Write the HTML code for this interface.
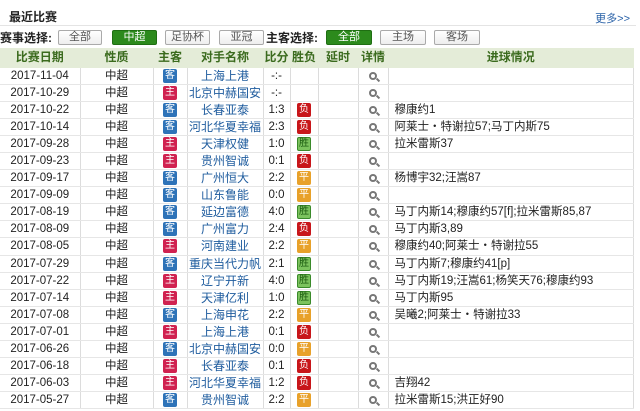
<!DOCTYPE html>
<html><head><meta charset="utf-8"><style>
*{margin:0;padding:0;box-sizing:border-box}
body{width:640px;height:411px;background:#fff;font-family:"Liberation Sans","Noto Sans CJK SC",sans-serif;font-size:11px;color:#222;position:relative;overflow:hidden}
.title{position:absolute;left:0;top:4px;width:636px;height:22px;border-bottom:1px solid #e4e4e4}
.title b{position:absolute;left:9px;top:4px;font-size:12px;color:#222}
.more{position:absolute;right:6px;top:6px;color:#2a62a8;font-size:11px}
.bar{position:absolute;top:27px;left:0;height:18px;width:640px}
.lbl{position:absolute;top:2px;font-size:12px;font-weight:bold;color:#222}
.btn{position:absolute;top:3px;height:15px;border:1px solid #aaa;border-radius:2px;background:linear-gradient(#fff,#eee);color:#555;text-align:center;font-size:11px;line-height:13px}
.btn.on{background:#2c8a1c;border-color:#1f6e12;color:#fff}
table{position:absolute;left:0;top:48px;width:634px;border-collapse:collapse;table-layout:fixed}
td,th{border-right:1px solid #dcdcdc;border-bottom:1px solid #e6e6e6;text-align:center;white-space:nowrap;overflow:hidden;height:17.1px;padding:0;line-height:16px;font-size:11.5px}
th{background:#e4ecd8;color:#3b6b1e;font-size:12px;height:19px;border-color:#e4ecd8}
td:last-child{text-align:left;padding-left:6px}
td.o{color:#1f5c9e;font-size:12px}
.b{display:inline-block;width:14px;height:14px;line-height:14px;font-size:10px;color:#fff;border-radius:2px;vertical-align:middle}
.k{background:#2e73b8}.z{background:#d02250}.f{background:#c8161a}.s{background:#7cc35e;color:#1c5c10;border:1px solid #3a8a2a;line-height:12px}.p{background:#e8a12a}
.q{display:inline-block;width:8px;height:8px;border:2px solid #777;border-radius:50%;position:relative;vertical-align:middle}
.q:after{content:"";position:absolute;left:5px;top:5px;width:4px;height:2px;background:#777;transform:rotate(45deg)}
</style></head><body>
<div class="title"><b>最近比赛</b><span class="more">更多&gt;&gt;</span></div>
<div class="bar">
<span class="lbl" style="left:0">赛事选择:</span>
<span class="btn" style="left:58px;width:44px">全部</span>
<span class="btn on" style="left:112px;width:45px">中超</span>
<span class="btn" style="left:165px;width:45px">足协杯</span>
<span class="btn" style="left:219px;width:45px">亚冠</span>
<span class="lbl" style="left:266px">主客选择:</span>
<span class="btn on" style="left:326px;width:46px">全部</span>
<span class="btn" style="left:380px;width:46px">主场</span>
<span class="btn" style="left:434px;width:46px">客场</span>
</div>
<table>
<colgroup><col style="width:80px"><col style="width:73px"><col style="width:34px"><col style="width:76px"><col style="width:27px"><col style="width:28px"><col style="width:40px"><col style="width:30px"><col></colgroup>
<tr><th>比赛日期</th><th>性质</th><th>主客</th><th>对手名称</th><th>比分</th><th>胜负</th><th>延时</th><th>详情</th><th>进球情况</th></tr>
<tr><td>2017-11-04</td><td>中超</td><td><span class="b k">客</span></td><td class="o">上海上港</td><td>-:-</td><td></td><td></td><td><i class="q"></i></td><td></td></tr>
<tr><td>2017-10-29</td><td>中超</td><td><span class="b z">主</span></td><td class="o">北京中赫国安</td><td>-:-</td><td></td><td></td><td><i class="q"></i></td><td></td></tr>
<tr><td>2017-10-22</td><td>中超</td><td><span class="b k">客</span></td><td class="o">长春亚泰</td><td>1:3</td><td><span class="b f">负</span></td><td></td><td><i class="q"></i></td><td>穆康约1</td></tr>
<tr><td>2017-10-14</td><td>中超</td><td><span class="b k">客</span></td><td class="o">河北华夏幸福</td><td>2:3</td><td><span class="b f">负</span></td><td></td><td><i class="q"></i></td><td>阿莱士・特谢拉57;马丁内斯75</td></tr>
<tr><td>2017-09-28</td><td>中超</td><td><span class="b z">主</span></td><td class="o">天津权健</td><td>1:0</td><td><span class="b s">胜</span></td><td></td><td><i class="q"></i></td><td>拉米雷斯37</td></tr>
<tr><td>2017-09-23</td><td>中超</td><td><span class="b z">主</span></td><td class="o">贵州智诚</td><td>0:1</td><td><span class="b f">负</span></td><td></td><td><i class="q"></i></td><td></td></tr>
<tr><td>2017-09-17</td><td>中超</td><td><span class="b k">客</span></td><td class="o">广州恒大</td><td>2:2</td><td><span class="b p">平</span></td><td></td><td><i class="q"></i></td><td>杨博宇32;汪嵩87</td></tr>
<tr><td>2017-09-09</td><td>中超</td><td><span class="b k">客</span></td><td class="o">山东鲁能</td><td>0:0</td><td><span class="b p">平</span></td><td></td><td><i class="q"></i></td><td></td></tr>
<tr><td>2017-08-19</td><td>中超</td><td><span class="b k">客</span></td><td class="o">延边富德</td><td>4:0</td><td><span class="b s">胜</span></td><td></td><td><i class="q"></i></td><td>马丁内斯14;穆康约57[f];拉米雷斯85,87</td></tr>
<tr><td>2017-08-09</td><td>中超</td><td><span class="b k">客</span></td><td class="o">广州富力</td><td>2:4</td><td><span class="b f">负</span></td><td></td><td><i class="q"></i></td><td>马丁内斯3,89</td></tr>
<tr><td>2017-08-05</td><td>中超</td><td><span class="b z">主</span></td><td class="o">河南建业</td><td>2:2</td><td><span class="b p">平</span></td><td></td><td><i class="q"></i></td><td>穆康约40;阿莱士・特谢拉55</td></tr>
<tr><td>2017-07-29</td><td>中超</td><td><span class="b k">客</span></td><td class="o">重庆当代力帆</td><td>2:1</td><td><span class="b s">胜</span></td><td></td><td><i class="q"></i></td><td>马丁内斯7;穆康约41[p]</td></tr>
<tr><td>2017-07-22</td><td>中超</td><td><span class="b z">主</span></td><td class="o">辽宁开新</td><td>4:0</td><td><span class="b s">胜</span></td><td></td><td><i class="q"></i></td><td>马丁内斯19;汪嵩61;杨笑天76;穆康约93</td></tr>
<tr><td>2017-07-14</td><td>中超</td><td><span class="b z">主</span></td><td class="o">天津亿利</td><td>1:0</td><td><span class="b s">胜</span></td><td></td><td><i class="q"></i></td><td>马丁内斯95</td></tr>
<tr><td>2017-07-08</td><td>中超</td><td><span class="b k">客</span></td><td class="o">上海申花</td><td>2:2</td><td><span class="b p">平</span></td><td></td><td><i class="q"></i></td><td>吴曦2;阿莱士・特谢拉33</td></tr>
<tr><td>2017-07-01</td><td>中超</td><td><span class="b z">主</span></td><td class="o">上海上港</td><td>0:1</td><td><span class="b f">负</span></td><td></td><td><i class="q"></i></td><td></td></tr>
<tr><td>2017-06-26</td><td>中超</td><td><span class="b k">客</span></td><td class="o">北京中赫国安</td><td>0:0</td><td><span class="b p">平</span></td><td></td><td><i class="q"></i></td><td></td></tr>
<tr><td>2017-06-18</td><td>中超</td><td><span class="b z">主</span></td><td class="o">长春亚泰</td><td>0:1</td><td><span class="b f">负</span></td><td></td><td><i class="q"></i></td><td></td></tr>
<tr><td>2017-06-03</td><td>中超</td><td><span class="b z">主</span></td><td class="o">河北华夏幸福</td><td>1:2</td><td><span class="b f">负</span></td><td></td><td><i class="q"></i></td><td>吉翔42</td></tr>
<tr><td>2017-05-27</td><td>中超</td><td><span class="b k">客</span></td><td class="o">贵州智诚</td><td>2:2</td><td><span class="b p">平</span></td><td></td><td><i class="q"></i></td><td>拉米雷斯15;洪正好90</td></tr>
</table>
</body></html>
